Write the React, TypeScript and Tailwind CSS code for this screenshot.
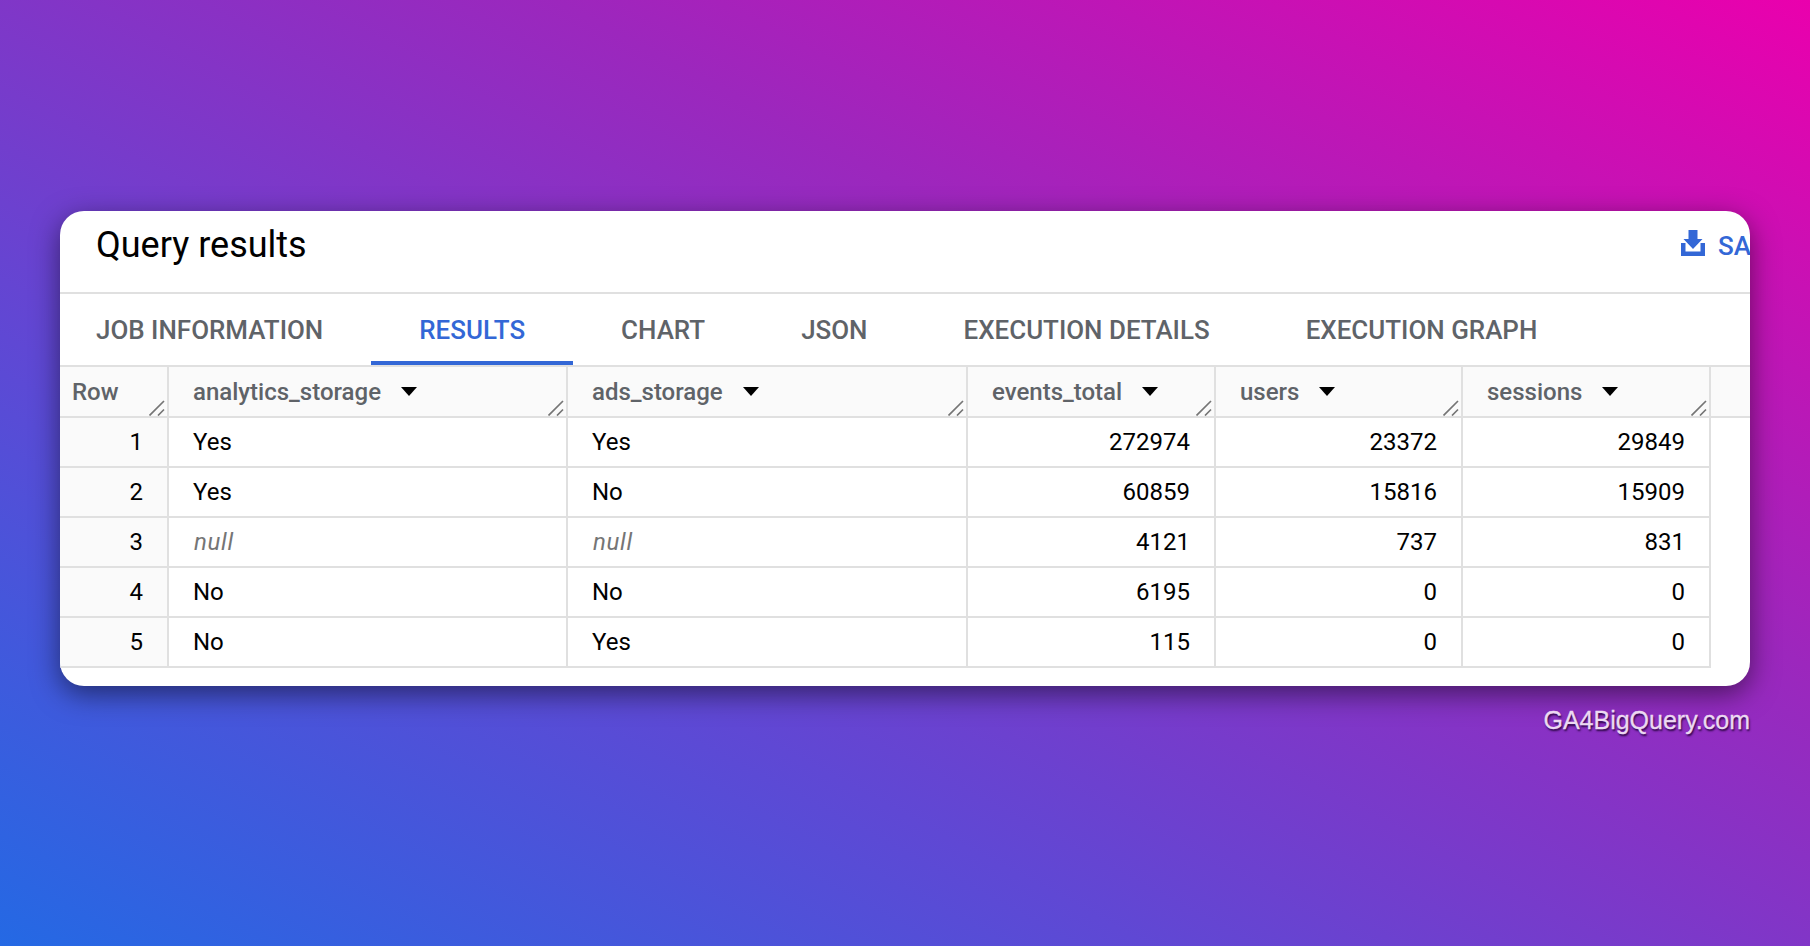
const columns = "grid grid-cols-[109px_399px_400px_248px_247px_248px_39px]"

const tabs = ["JOB INFORMATION", "RESULTS", "CHART", "JSON", "EXECUTION DETAILS", "EXECUTION GRAPH"]

const headers = ["analytics_storage", "ads_storage", "events_total", "users", "sessions"]

const rows = [
  ["Yes", "Yes", "272974", "23372", "29849"],
  ["Yes", "No", "60859", "15816", "15909"],
  [null, null, "4121", "737", "831"],
  ["No", "No", "6195", "0", "0"],
  ["No", "Yes", "115", "0", "0"],
]

function ResizeHandle() {
  return (
    <svg width="16" height="16" viewBox="0 0 16 16" className="absolute right-[2px] bottom-0 text-[#757575]">
      <path d="M0.5 15.5 L15 1 M9 15.5 L15 9.5" stroke="currentColor" strokeWidth="1.7" fill="none" />
    </svg>
  )
}

function SortArrow() {
  return (
    <svg width="16" height="9" viewBox="0 0 16 9" className="shrink-0">
      <path d="M0 0 H16 L8 9 Z" fill="#000" />
    </svg>
  )
}

function SaveIcon() {
  return (
    <svg width="24" height="26" viewBox="0 0 24 26" className="shrink-0">
      <path d="M7.5 0 H16.5 V9 H21.5 L12 19 L2.5 9 H7.5 Z" fill="#3367d6" />
      <path d="M0 13 H4.5 V21.5 H19.5 V13 H24 V26 H0 Z" fill="#3367d6" />
    </svg>
  )
}

export default function App() {
  return (
    <div className="h-[946px] w-full overflow-hidden bg-[linear-gradient(208deg,#ea00ad_0%,#9c27bd_35%,#5f48d4_68%,#2469e4_100%)] px-[60px] pt-[211px] font-['Roboto',sans-serif]">
      <div className="h-[475px] overflow-hidden rounded-[24px] bg-white shadow-[0_8px_28px_rgba(0,0,0,0.5)]">
        <div className="flex h-[83px] items-start justify-between border-b-2 border-[#e0e0e0]">
          <h1 className="pl-9 pt-[12px] text-[36px] leading-[44px] text-black">Query results</h1>
          <div className="flex w-[69px] shrink-0 items-start gap-[13px] overflow-hidden pt-[19px]">
            <SaveIcon />
            <span className="pt-[3px] text-[26px] font-medium leading-[26px] text-[#3367d6]">SAVE</span>
          </div>
        </div>

        <div className="flex h-[73px] items-stretch border-b-2 border-[#e0e0e0] pl-9">
          {tabs.map((tab, i) => (
            <div
              key={tab}
              className={
                i === 0
                  ? "flex items-center pt-[2px] pr-12 text-[25.95px] font-medium text-[#5f6368]"
                  : i === 1
                    ? "flex items-center border-b-4 border-[#3367d6] px-12 pt-[6px] text-[25.95px] font-medium text-[#3367d6]"
                    : "flex items-center px-12 pt-[2px] text-[25.95px] font-medium text-[#5f6368]"
              }
            >
              {tab}
            </div>
          ))}
        </div>

        <div className={`${columns} h-[51px] border-b-2 border-[#e0e0e0] bg-[#fafafa]`}>
          <div className="relative flex items-center border-r-2 border-[#e0e0e0] pl-3 text-[24px] font-medium text-[#5f6368]">
            Row
            <ResizeHandle />
          </div>
          {headers.map((h) => (
            <div key={h} className="relative flex items-center gap-5 border-r-2 border-[#e0e0e0] pl-6 text-[24px] font-medium text-[#5f6368]">
              {h}
              <SortArrow />
              <ResizeHandle />
            </div>
          ))}
          <div />
        </div>

        {rows.map((row, i) => (
          <div key={i} className={`${columns} h-[50px] text-[24px] text-black`}>
            <div className="flex items-center justify-end border-r-2 border-b-2 border-[#e0e0e0] bg-[#fafafa] pr-[24px]">{i + 1}</div>
            {row.map((cell, j) => (
              <div
                key={j}
                className={
                  j < 2
                    ? "flex items-center border-r-2 border-b-2 border-[#e0e0e0] pl-6"
                    : "flex items-center justify-end border-r-2 border-b-2 border-[#e0e0e0] pr-6"
                }
              >
                {cell === null ? <span className="pl-px italic tracking-[0.7px] text-[#757575]">null</span> : cell}
              </div>
            ))}
            <div />
          </div>
        ))}
      </div>

      <div className="pt-[19px] text-right font-['Liberation_Sans',sans-serif] text-[25px] leading-[30px] text-[#ecd9f2] [-webkit-text-stroke:0.3px_#ecd9f2] [text-shadow:1px_2px_2px_rgba(30,0,50,0.9)]">
        GA4BigQuery.com
      </div>
    </div>
  )
}
